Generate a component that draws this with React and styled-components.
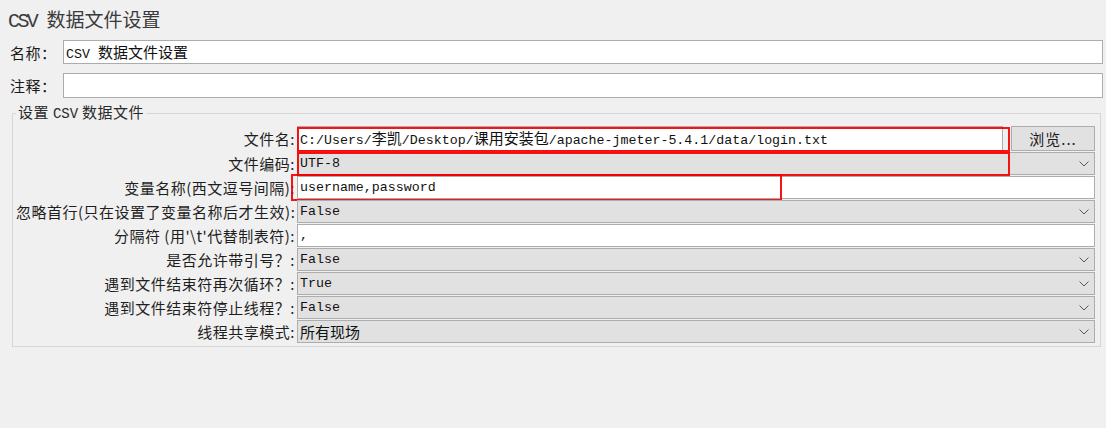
import styled, { createGlobalStyle } from "styled-components";

const CJK_RUN = /([\u3000-\u303f\u4e00-\u9fff\uff00-\uffef]+)/;

const GlobalStyle = createGlobalStyle`
  body {
    margin: 0;
    background: #f0f0f0;
    font-family: "Noto Sans CJK SC", sans-serif;
    color: #1a1a1a;
  }
`;

const Page = styled.div`
  width: 1106px;
  box-sizing: border-box;
  padding: 6px 3px 0 8px;
`;

const Title = styled.div`
  height: 26px;
  line-height: 26px;
  font-size: 19px;
  color: #3a3a3a;
`;

const Latin = styled.span`
  font-family: "Liberation Mono", monospace;
  font-size: ${(p) => p.$size || 15}px;
  letter-spacing: ${(p) => p.$squeeze || 0}px;
  margin-right: ${(p) => p.$after || 0}px;
`;

const Cjk = styled.span`
  font-family: "Noto Sans CJK SC", sans-serif;
  font-size: 15px;
`;

const TopRow = styled.div`
  display: grid;
  grid-template-columns: 53px 1fr;
  align-items: stretch;
  padding-left: 2px;
  height: ${(p) => p.$height}px;
  margin-top: ${(p) => p.$gap}px;
`;

const TopLabel = styled.span`
  align-self: center;
  font-size: 15px;
  letter-spacing: 0.5px;
`;

const Group = styled.fieldset`
  margin: 5px 2px 0 4px;
  padding: 3px 5px 3px 3px;
  border: 1px solid #d6d6d6;
  min-width: 0;
`;

const Legend = styled.legend`
  padding: 0 2px;
  font-size: 15px;
  line-height: 18px;
  letter-spacing: 0.5px;
  color: #2a2a2a;
`;

const Form = styled.div`
  display: grid;
  grid-template-columns: 281px 1fr;
  grid-template-rows: 25px;
  grid-auto-rows: 23px;
  row-gap: 1px;
`;

const Label = styled.div`
  text-align: right;
  font-size: 15px;
  letter-spacing: 0.5px;
  line-height: ${(p) => (p.$first ? 25 : 23)}px;
  padding-right: 2px;
  white-space: nowrap;
  color: #1e1e1e;
`;

const Cell = styled.div`
  position: relative;
  display: flex;
  gap: 8px;
  min-width: 0;
`;

const valueBox = `
  flex: 1;
  box-sizing: border-box;
  padding: 0 2px;
  font-family: "Liberation Mono", "Noto Sans CJK SC", monospace;
  font-size: 13.3px;
  color: #111;
  white-space: pre;
  overflow: hidden;
`;

const TextField = styled.div`
  ${valueBox}
  line-height: 21px;
  background: #fff;
  border: 1px solid #acacac;
`;

const Combo = styled.div`
  ${valueBox}
  display: flex;
  align-items: center;
  justify-content: space-between;
  padding-right: 5px;
  background: #e1e1e1;
  border: 1px solid #adadad;
`;

const Browse = styled.div`
  width: 84px;
  box-sizing: border-box;
  display: flex;
  align-items: center;
  justify-content: center;
  background: #e1e1e1;
  border: 1px solid #adadad;
  font-size: 15px;
  letter-spacing: 1px;
`;

const Highlight = styled.div`
  position: absolute;
  box-sizing: border-box;
  left: ${(p) => p.$left}px;
  top: ${(p) => p.$top}px;
  width: ${(p) => p.$width}px;
  height: ${(p) => p.$height}px;
  border: 2px solid rgba(245, 0, 0, 0.92);
  pointer-events: none;
`;

const mixed = (text) =>
  text
    .split(CJK_RUN)
    .map((part, i) => (CJK_RUN.test(part) ? <Cjk key={i}>{part}</Cjk> : part));

const Chevron = () => (
  <svg width="10" height="6" viewBox="0 0 10 6">
    <polyline points="0.5,0.5 5,5 9.5,0.5" fill="none" stroke="#5c5c5c" strokeWidth="1" />
  </svg>
);

const rows = [
  { label: "文件编码:", value: "UTF-8", combo: true, mark: { left: 0, top: 0, width: 713, height: 24 } },
  { label: "变量名称(西文逗号间隔):", value: "username,password", mark: { left: -6, top: -2, width: 491, height: 27 } },
  { label: "忽略首行(只在设置了变量名称后才生效):", value: "False", combo: true },
  { label: "分隔符 (用'\\t'代替制表符):", value: "," },
  { label: "是否允许带引号？:", value: "False", combo: true },
  { label: "遇到文件结束符再次循环？:", value: "True", combo: true },
  { label: "遇到文件结束符停止线程？:", value: "False", combo: true },
  { label: "线程共享模式:", value: "所有现场", combo: true },
];

const App = () => {
  return (
    <Page>
      <GlobalStyle />
      <Title>
        <Latin $size={20} $squeeze={-2.6} $after={6}>CSV</Latin> 数据文件设置
      </Title>
      <TopRow $height={24} $gap={8}>
        <TopLabel>名称：</TopLabel>
        <TextField>{mixed("CSV 数据文件设置")}</TextField>
      </TopRow>
      <TopRow $height={25} $gap={9}>
        <TopLabel>注释：</TopLabel>
        <TextField />
      </TopRow>
      <Group>
        <Legend>
          设置 <Latin $size={14}>CSV</Latin> 数据文件
        </Legend>
        <Form>
          <Label $first>文件名:</Label>
          <Cell>
            <TextField>
              {mixed("C:/Users/李凯/Desktop/课用安装包/apache-jmeter-5.4.1/data/login.txt")}
            </TextField>
            <Browse>浏览...</Browse>
            <Highlight $left={0} $top={1} $width={713} $height={25} />
          </Cell>
          {rows.map((row) => (
            <>
              <Label key={row.label}>{row.label}</Label>
              <Cell key={row.label + "-v"}>
                {row.combo ? (
                  <Combo>
                    <span>{mixed(row.value)}</span>
                    <Chevron />
                  </Combo>
                ) : (
                  <TextField>{mixed(row.value)}</TextField>
                )}
                {row.mark && (
                  <Highlight
                    $left={row.mark.left}
                    $top={row.mark.top}
                    $width={row.mark.width}
                    $height={row.mark.height}
                  />
                )}
              </Cell>
            </>
          ))}
        </Form>
      </Group>
    </Page>
  );
};

export default App;
